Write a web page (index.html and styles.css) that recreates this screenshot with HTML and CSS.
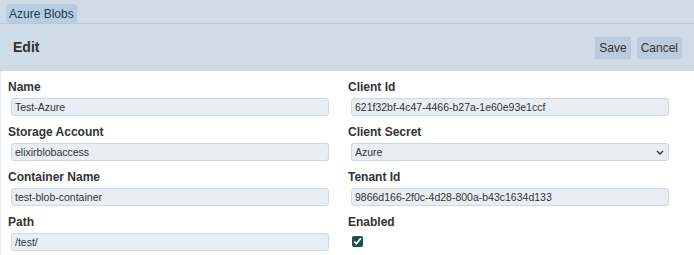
FILE: index.html
```html
<!DOCTYPE html>
<html lang="en">
  <head>
    <meta charset="utf-8">
    <title>Azure Blobs</title>
    <link rel="stylesheet" href="styles.css">
  </head>
  <body>
    <nav class="tabs">
      <span class="tab">Azure Blobs</span>
    </nav>

    <header class="toolbar">
      <h2>Edit</h2>
      <div class="actions">
        <button type="button" class="button">Save</button>
        <button type="button" class="button">Cancel</button>
      </div>
    </header>

    <main class="form">
      <div class="field">
        <label>Name</label>
        <input type="text" value="Test-Azure">
      </div>
      <div class="field">
        <label>Client Id</label>
        <input type="text" value="621f32bf-4c47-4466-b27a-1e60e93e1ccf">
      </div>
      <div class="field">
        <label>Storage Account</label>
        <input type="text" value="elixirblobaccess">
      </div>
      <div class="field">
        <label>Client Secret</label>
        <div class="select-wrap">
          <select>
            <option>Azure</option>
          </select>
          <svg class="chevron" width="8" height="5" viewBox="0 0 8 5">
            <path d="M1 1 L4 4 L7 1" fill="none" stroke="#333" stroke-width="1.4"/>
          </svg>
        </div>
      </div>
      <div class="field">
        <label>Container Name</label>
        <input type="text" value="test-blob-container">
      </div>
      <div class="field">
        <label>Tenant Id</label>
        <input type="text" value="9866d166-2f0c-4d28-800a-b43c1634d133">
      </div>
      <div class="field">
        <label>Path</label>
        <input type="text" value="/test/">
      </div>
      <div class="field">
        <label>Enabled</label>
        <input type="checkbox" class="check" checked>
      </div>
    </main>
  </body>
</html>
```

FILE: styles.css
```css
body {
    font: 12px/1.2 "Liberation Sans", Arial, sans-serif;
    margin: 0;
    color: #333;
    background: #fff;
}
.tabs {
    background: #cfdbe6;
    padding: 4px 6px 0;
    border-bottom: 1px solid #b7c8d8;
    display: flex;
}
.tab {
    background: #b9cde0;
    color: #1d3a4f;
    border-radius: 4px 4px 0 0;
    padding: 2px 3px 1px;
    line-height: 16px;
}
.toolbar {
    background: #cfdbe6;
    height: 47px;
    display: flex;
    align-items: center;
    justify-content: space-between;
    padding: 0 12px 0 13px;
}
.toolbar h2 {
    margin: 0;
    font-size: 14px;
    color: #333;
}
.actions {
    display: flex;
    gap: 6px;
}
.button {
    font: 12px "Liberation Sans", Arial, sans-serif;
    color: #333;
    background: #b9cbdc;
    border: none;
    padding: 0 4px;
    height: 22px;
}
.form {
    display: grid;
    grid-template-columns: 330px 330px;
    column-gap: 10px;
    padding: 8px 0 0 7px;
    border-left: 1px solid #e3e8ee;
}
.field {
    display: flex;
    flex-direction: column;
    align-items: flex-start;
    height: 45px;
}
.field label {
    font-weight: bold;
    line-height: 16px;
    margin-bottom: 3px;
}
.field input[type="text"],
.field select {
    box-sizing: border-box;
    width: 318px;
    height: 18px;
    margin: 0 0 0 3px;
    padding: 0 3px;
    font: 10.5px "Liberation Sans", Arial, sans-serif;
    color: #333;
    background: #e9eef5;
    border: 1px solid #cfd9e4;
    border-radius: 3px;
}
.select-wrap {
    position: relative;
}
.field select {
    appearance: none;
    display: block;
}
.chevron {
    position: absolute;
    right: 5px;
    top: 7px;
}
.check {
    width: 11px;
    height: 11px;
    margin: 3px 0 0 4px;
    accent-color: #1f4f4c;
}
```
